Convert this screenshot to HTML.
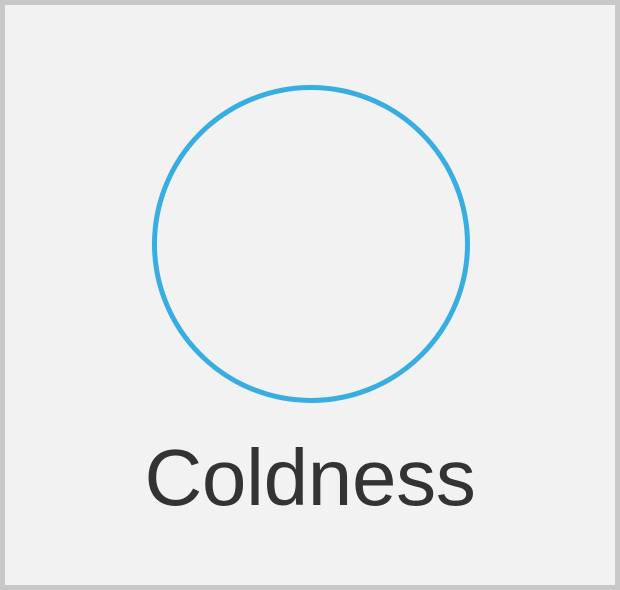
<!DOCTYPE html>
<html><head><style>
html,body{margin:0;padding:0;}
body{width:620px;height:590px;overflow:hidden;background:#c8c8c8;position:relative;}
.box{position:absolute;left:5px;top:5px;width:610px;height:580px;background:#f2f2f2;}
svg{position:absolute;left:0;top:0;}
.t{position:absolute;left:0;width:620px;top:433px;text-align:center;font-family:"Liberation Sans",sans-serif;font-size:80px;color:#333;line-height:90px;letter-spacing:-0.3px;}
</style></head><body>
<div class="box"></div>
<svg width="620" height="590"><circle cx="311" cy="244" r="156.5" fill="none" stroke="#37ade2" stroke-width="5"/></svg>
<div class="t">Coldness</div>
</body></html>
